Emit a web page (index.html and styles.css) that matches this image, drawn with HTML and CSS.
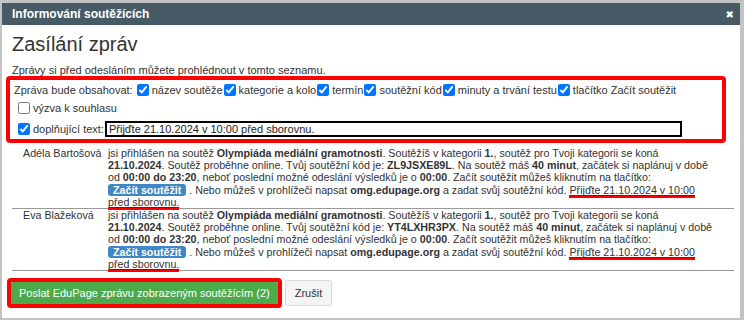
FILE: index.html
```html
<!DOCTYPE html>
<html>
<head>
  <link rel="stylesheet" href="styles.css">
</head>
<body>
  <div class="dialog">
    <div class="dialog-header">
      <span class="dialog-title">Informování soutěžících</span>
      <span class="dialog-close">&#x2716;</span>
    </div>
    <div class="dialog-body">
      <h1>Zasílání zpráv</h1>
      <p class="intro">Zprávy si před odesláním můžete prohlédnout v tomto seznamu.</p>

      <div class="options highlight">
        <div class="option-row">
          <span class="option-label">Zpráva bude obsahovat:</span>
          <label><input type="checkbox" checked> název soutěže</label>
          <label><input type="checkbox" checked> kategorie a kolo</label>
          <label><input type="checkbox" checked> termín</label>
          <label><input type="checkbox" checked> soutěžní kód</label>
          <label><input type="checkbox" checked> minuty a trvání testu</label>
          <label><input type="checkbox" checked> tlačítko Začít soutěžit</label>
        </div>
        <div class="option-row indent">
          <label><input type="checkbox"> výzva k souhlasu</label>
        </div>
        <div class="option-row indent extra">
          <label><input type="checkbox" checked> doplňující text:</label>
          <input type="text" class="extra-input" value="Přijďte 21.10.2024 v 10:00 před sborovnu.">
        </div>
      </div>

      <div class="messages">
        <div class="message">
          <div class="message-name">Adéla Bartošová</div>
          <div class="message-text">jsi přihlášen na soutěž <b>Olympiáda mediální gramotnosti</b>. Soutěžíš v kategorii <b>1.</b>, soutěž pro Tvoji kategorii se koná<br><b>21.10.2024</b>. Soutěž proběhne online. Tvůj soutěžní kód je: <b>ZL9JSXE89L</b>. Na soutěž máš <b>40 minut</b>, začátek si naplánuj v době<br>od <b>00:00 do 23:20</b>, neboť poslední možné odeslání výsledků je o <b>00:00</b>. Začít soutěžit můžeš kliknutím na tlačítko:<br><span class="start-btn">Začít soutěžit</span> . Nebo můžeš v prohlížeči napsat <b>omg.edupage.org</b> a zadat svůj soutěžní kód. <span class="mark">Přijďte 21.10.2024 v 10:00<br>před sborovnu.</span></div>
        </div>
        <div class="message">
          <div class="message-name">Eva Blažeková</div>
          <div class="message-text">jsi přihlášen na soutěž <b>Olympiáda mediální gramotnosti</b>. Soutěžíš v kategorii <b>1.</b>, soutěž pro Tvoji kategorii se koná<br><b>21.10.2024</b>. Soutěž proběhne online. Tvůj soutěžní kód je: <b>YT4LXHR3PX</b>. Na soutěž máš <b>40 minut</b>, začátek si naplánuj v době<br>od <b>00:00 do 23:20</b>, neboť poslední možné odeslání výsledků je o <b>00:00</b>. Začít soutěžit můžeš kliknutím na tlačítko:<br><span class="start-btn">Začít soutěžit</span> . Nebo můžeš v prohlížeči napsat <b>omg.edupage.org</b> a zadat svůj soutěžní kód. <span class="mark">Přijďte 21.10.2024 v 10:00<br>před sborovnu.</span></div>
        </div>
      </div>

      <div class="actions">
        <div class="highlight send-wrap">
          <button class="btn-send">Poslat EduPage zprávu zobrazeným soutěžícím (2)</button>
        </div>
        <button class="btn-cancel">Zrušit</button>
      </div>
    </div>
  </div>
</body>
</html>
```

FILE: styles.css
```css
html, body {
  margin: 0;
  height: 100%;
}
body {
  background: #c3c3c3;
  font-family: "Liberation Sans", Arial, sans-serif;
  font-size: 11px;
  color: #333;
  padding: 3px 4px 2px 2px;
  box-sizing: border-box;
}
.dialog {
  background: #fff;
  height: 100%;
  display: flex;
  flex-direction: column;
  overflow: hidden;
}
.dialog-header {
  background: #475a66;
  color: #fff;
  height: 22px;
  display: flex;
  align-items: center;
  justify-content: space-between;
  padding: 0 6px 0 10px;
  flex-shrink: 0;
}
.dialog-title {
  font-weight: bold;
  font-size: 12px;
}
.dialog-close {
  font-size: 10px;
  font-family: "DejaVu Sans", sans-serif;
}
.dialog-body {
  padding: 0 4px;
}
h1 {
  font-size: 20px;
  font-weight: normal;
  margin: 6px 0 0 6px;
  line-height: 26px;
  color: #333;
}
.intro {
  margin: 7px 0 0 6px;
  line-height: 13px;
}
.highlight {
  border: 4px solid #f00;
  border-radius: 4px;
}
.options {
  width: 708px;
  margin-top: -1px;
  padding: 1px 0 0 4px;
  box-sizing: content-box;
}
.option-row {
  display: flex;
  align-items: center;
  flex-wrap: wrap;
  line-height: 14px;
  height: 18px;
}
.option-row label {
  display: flex;
  align-items: center;
  margin-right: 1px;
}
.option-label {
  margin-right: 4px;
}
.option-row input[type=checkbox] {
  width: 12px;
  height: 12px;
  margin: 0 3px 0 0;
}
.indent {
  padding-left: 4px;
}
.extra {
  margin-top: 2px;
  height: 20px;
}
.extra-input {
  width: 577px;
  height: 16px;
  box-sizing: border-box;
  border: 2px solid #000;
  font-family: "Liberation Sans", Arial, sans-serif;
  font-size: 11px;
  padding: 0 2px;
  color: #222;
  outline: none;
}
.messages {
  margin: 4px 0 0 6px;
  width: 722px;
  font-size: 10.7px;
}
.message {
  display: flex;
  box-sizing: border-box;
  border-bottom: 1px solid #999;
  height: 62px;
}
.message-name {
  width: 85px;
  padding-left: 11px;
  flex-shrink: 0;
  line-height: 12.2px;
}
.message-text {
  white-space: nowrap;
  line-height: 12.2px;
}
.start-btn {
  background: #3f87c5;
  color: #fff;
  font-weight: bold;
  border-radius: 3px;
  padding: 0 5px;
}
.mark {
  text-decoration: underline;
  text-decoration-thickness: 1px;
  text-underline-offset: 1px;
  background: linear-gradient(#f00, #f00) no-repeat left bottom / 100% 3px;
  padding-bottom: 2px;
  box-decoration-break: clone;
  -webkit-box-decoration-break: clone;
}
.actions {
  display: flex;
  align-items: center;
  gap: 3px;
  margin: 7px 0 0 1px;
}
.send-wrap {
  display: flex;
}
button {
  font-family: "Liberation Sans", Arial, sans-serif;
  font-size: 11px;
  cursor: pointer;
}
.btn-send {
  background: #4caa4c;
  color: #fff;
  border: none;
  height: 22px;
  padding: 0 8px;
  border-radius: 1px;
}
.btn-cancel {
  background: #f4f4f4;
  color: #333;
  border: 1px solid #dcdcdc;
  border-radius: 2px;
  height: 26px;
  padding: 0 9px;
}
```
